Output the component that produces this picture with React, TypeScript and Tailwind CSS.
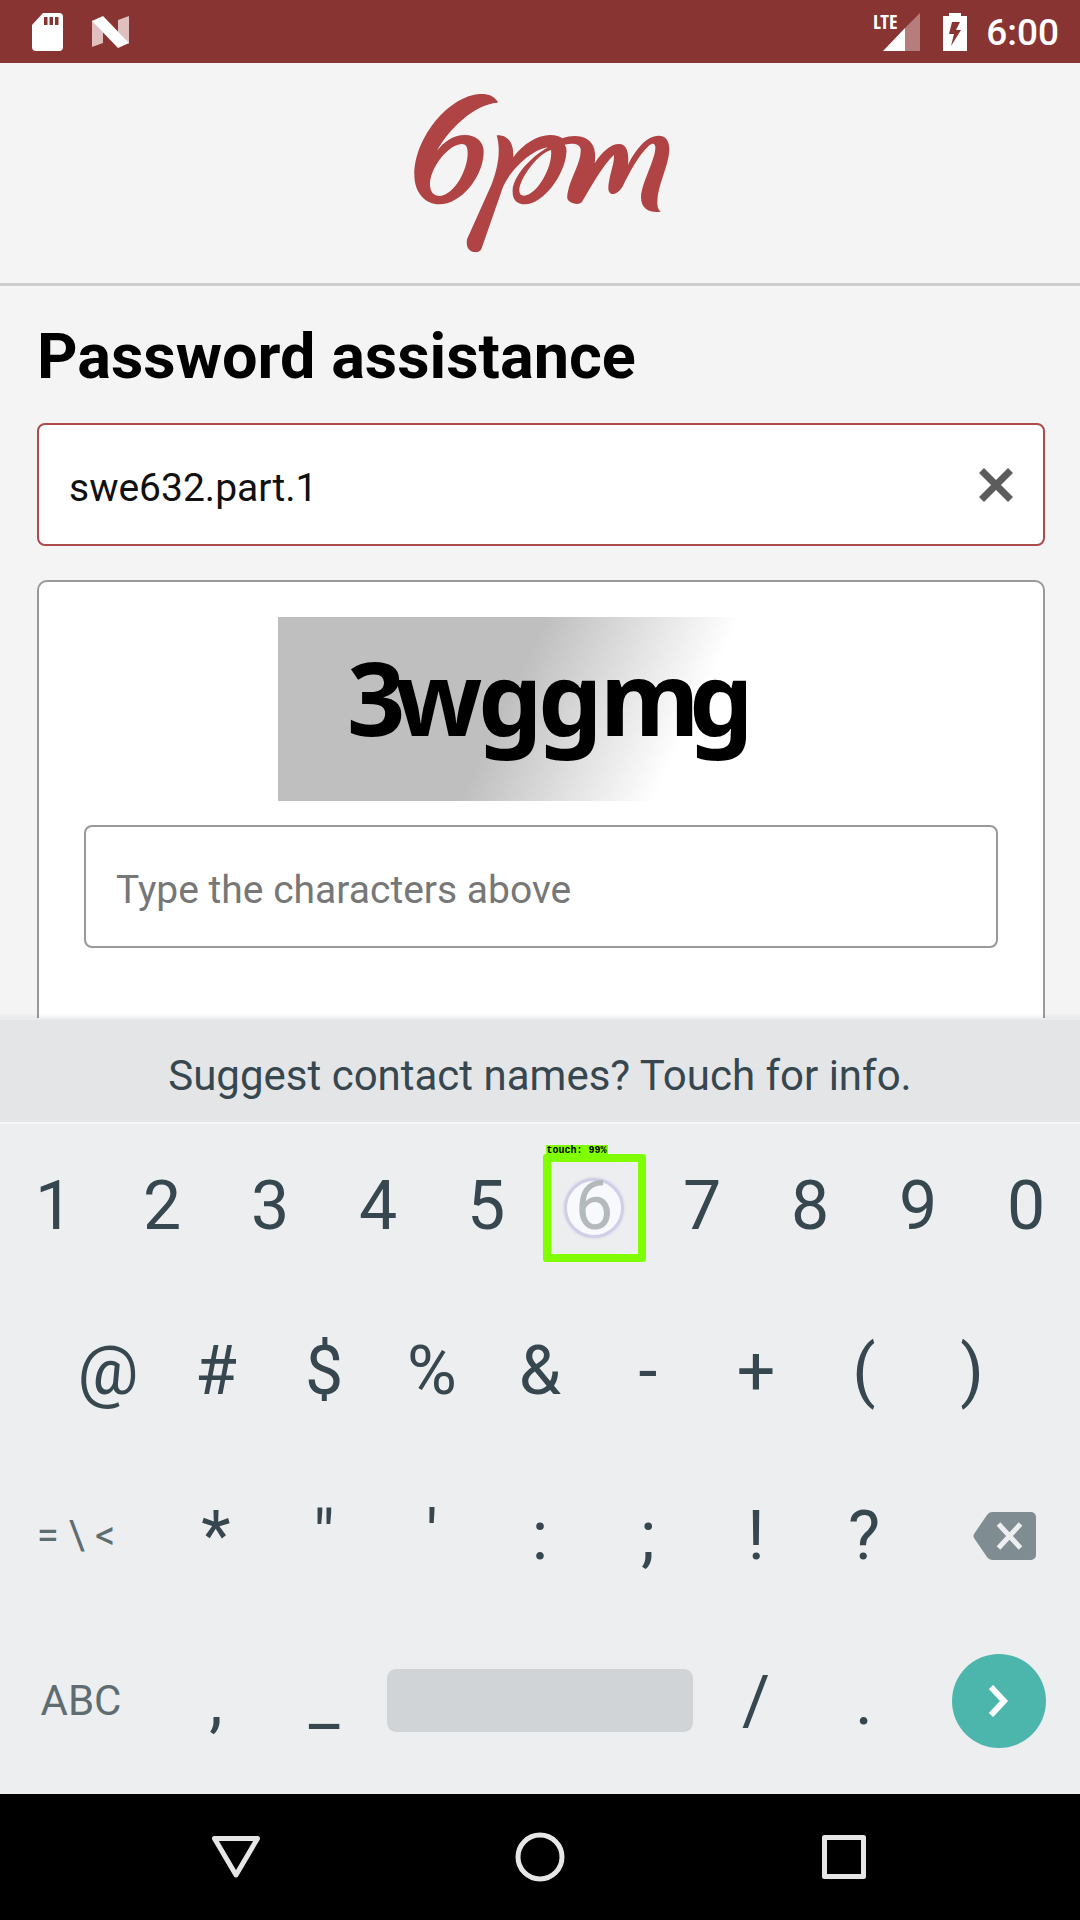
import { useState } from "react";

function StatusBar() {
  return (
    <header className="flex h-[63px] shrink-0 items-center justify-between bg-[#883432] pr-[21px] pl-8 text-white">
      <div className="flex items-center gap-7">
        <svg width="31" height="38" viewBox="0 0 31 38" aria-hidden="true">
          <path
            fillRule="evenodd"
            fill="#fff"
            d="M11 0H27a4 4 0 0 1 4 4V34a4 4 0 0 1-4 4H4a4 4 0 0 1-4-4V12ZM12 4V12H15.500V4ZM17.500 4V12H21V4ZM23 4V12H26.500V4Z"
          />
        </svg>
        <svg width="39" height="32" viewBox="0 0 39 32" aria-hidden="true">
          <path fill="#e0bfbf" d="M1 4 12 16V27L1 31ZM38 0V28L27 16V4Z" />
          <path fill="#fff" d="M1 5 12 0 38 27 27 32Z" />
        </svg>
      </div>
      <div className="flex items-center">
        <svg width="52" height="46" viewBox="-6 -4 52 46" aria-hidden="true">
          <path fill="#b57d7c" d="M44 0V38H29V15Z" />
          <path fill="#fff" d="M29 15V38H7Z" />
          <text
            x="-3"
            y="16"
            fill="#fff"
            fontFamily="'Open Sans Condensed', 'Liberation Sans Narrow', 'Liberation Sans', sans-serif"
            fontWeight="700"
            fontSize="20"
          >
            LTE
          </text>
        </svg>
        <svg className="ml-[21px]" width="24" height="38" viewBox="0 0 24 38" aria-hidden="true">
          <path
            fillRule="evenodd"
            fill="#fff"
            d="M6 0H18V3H24V38H0V3H6ZM9 9 6 21H11L8 33 18 17H13L17 9Z"
          />
        </svg>
        <span className="ml-[19px] pt-0.5 text-[37px] leading-none font-medium">6:00</span>
      </div>
    </header>
  );
}

function Logo() {
  return (
    <svg width="300" height="220" viewBox="0 0 900 660" role="img" aria-label="6pm">
      <g fill="#b04344" fillRule="evenodd">
        <path d="M323 95C312 78 295 71 270 72C180 76 73 200 73 315C73 370 108 403 147 403C215 403 281 318 281 245C281 215 258 195 225 195C188 195 160 218 141 242C175 180 250 103 323 98ZM215 222C170 225 118 300 120 345C121 366 131 378 150 378C192 375 233 302 233 250C233 230 228 222 215 222Z" />
        <path d="M320 196C350 194 372 215 370 262C400 220 445 195 480 195C498 195 510 199 517 205C560 190 603 200 613 238C616 252 616 265 614 280C638 242 665 220 690 222C712 225 717 250 714 285C735 240 770 197 805 197C830 197 838 215 838 240C836 290 800 350 802 400C803 415 806 420 812 425C785 430 752 420 753 380C755 340 795 270 796 235C797 220 788 217 778 226C742 260 718 310 700 345C690 365 676 374 665 372C652 368 654 350 658 330C662 305 673 280 672 254C640 285 605 345 577 394C572 403 560 404 550 400C530 393 530 385 533 368C542 320 575 275 572 238C570 222 550 218 524 224C530 232 530 240 529 250C524 315 460 403 405 403C380 403 366 388 368 360C370 320 420 262 474 232C420 240 350 310 334 365L275 535C270 547 262 547 252 546C235 543 228 530 231 508L304 345C325 290 333 240 320 196ZM483 240C440 252 388 330 388 360C388 372 393 377 402 377C440 377 490 290 483 240Z" />
      </g>
    </svg>
  );
}

function Captcha() {
  return (
    <svg
      className="mx-auto block"
      width="526"
      height="184"
      viewBox="0 0 526 184"
      role="img"
      aria-label="Captcha characters"
    >
      <defs>
        <linearGradient id="captcha-fade" gradientUnits="userSpaceOnUse" x1="269" y1="0" x2="427" y2="75">
          <stop offset="0" stopColor="#bfbfbf" />
          <stop offset="1" stopColor="#fff" />
        </linearGradient>
      </defs>
      <rect width="526" height="184" fill="url(#captcha-fade)" />
      <text
        x="69 117 200 260 322 411"
        y="119"
        fontFamily="'Noto Sans', sans-serif"
        fontWeight="700"
        fontSize="102"
        fill="#000"
      >
        3wggmg
      </text>
    </svg>
  );
}

const keyClass = "flex h-full flex-1 items-center justify-center text-[68px] leading-none";
const wideKeyClass = "flex h-full flex-[1.5] items-center justify-center text-[#5f6c71]";

function Key({ label }: { label: string }) {
  return (
    <button type="button" className={keyClass}>
      {label}
    </button>
  );
}

function TouchedKey({ label }: { label: string }) {
  return (
    <button type="button" className="relative flex h-full flex-1 items-center justify-center text-[68px] leading-none">
      <span className="absolute mt-1 size-[60px] rounded-full border-[3px] border-[#cfcfe8] bg-[#f8f9fc] shadow-[0_0_3px_#cfcfe8]" />
      <span className="relative text-[#b4b9bb]">{label}</span>
      <span className="absolute mt-1 h-[108px] w-[103px] rounded-[3px] border-8 border-[#7fff00]">
        <span className="absolute -top-[17px] -left-[5px] bg-[#7fff00] px-px font-['Liberation_Mono',monospace] text-[10px] leading-[11px] font-bold whitespace-nowrap text-black">
          touch: 99%
        </span>
      </span>
    </button>
  );
}

function Keyboard() {
  return (
    <section aria-label="Keyboard" className="shrink-0 bg-[#eceeef] pb-[11px] text-[#37474f]">
      <button
        type="button"
        className="flex h-[106px] w-full items-center justify-center border-t-2 border-b-2 border-t-[#ececed] border-b-[#f6f7f8] bg-[#e4e5e7] pt-2.5 text-[42px] leading-none shadow-[0_-2px_4px_rgba(0,0,0,0.06)]"
      >
        Suggest contact names? Touch for info.
      </button>
      <div className="flex h-[164px]">
        {["1", "2", "3", "4", "5"].map((k) => (
          <Key key={k} label={k} />
        ))}
        <TouchedKey label="6" />
        {["7", "8", "9", "0"].map((k) => (
          <Key key={k} label={k} />
        ))}
      </div>
      <div className="flex h-[165px] px-[5%]">
        {["@", "#", "$", "%", "&", "-", "+", "(", ")"].map((k) => (
          <Key key={k} label={k} />
        ))}
      </div>
      <div className="flex h-[165px]">
        <button type="button" className={wideKeyClass}>
          <span className="pr-2.5 text-[40px] leading-none">= \ &lt;</span>
        </button>
        {["*", '"', "'", ":", ";", "!", "?"].map((k) => (
          <Key key={k} label={k} />
        ))}
        <button type="button" aria-label="Backspace" className={wideKeyClass}>
          <svg className="ml-2.5" width="63" height="48" viewBox="0 0 63 48" aria-hidden="true">
            <path
              fill="#7f8c91"
              d="M19 0H58a5 5 0 0 1 5 5V43a5 5 0 0 1-5 5H19q-3 0-5-3L1 26q-1-2 0-4L14 3q2-3 5-3Z"
            />
            <path stroke="#eceeef" strokeWidth="5" d="M25.500 12 47.500 36M47.500 12 25.500 36" />
          </svg>
        </button>
      </div>
      <div className="flex h-[165px]">
        <button type="button" className={wideKeyClass}>
          <span className="text-[42px] leading-none">ABC</span>
        </button>
        {[",", "_"].map((k) => (
          <Key key={k} label={k} />
        ))}
        <button type="button" aria-label="Space" className="flex h-full flex-[3] items-center">
          <span className="mx-[9px] h-[63px] flex-1 rounded-[9px] bg-[#d0d4d7]" />
        </button>
        {["/", "."].map((k) => (
          <Key key={k} label={k} />
        ))}
        <button type="button" aria-label="Go" className={wideKeyClass}>
          <span className="flex size-[94px] items-center justify-center rounded-full bg-[#4db6ac]">
            <svg width="24" height="34" viewBox="0 0 24 34" aria-hidden="true">
              <path fill="none" stroke="#fff" strokeWidth="6" d="M4 3 17 17 4 31" />
            </svg>
          </span>
        </button>
      </div>
    </section>
  );
}

function NavBar() {
  return (
    <nav className="flex h-[126px] shrink-0 items-center justify-center gap-[254px] bg-black">
      <button type="button" aria-label="Back">
        <svg width="50" height="50" viewBox="0 0 50 50" fill="none" stroke="#e6e6e6" strokeWidth="5" strokeLinejoin="round" aria-hidden="true">
          <path d="M3.500 6.500H46.500L25 43Z" />
        </svg>
      </button>
      <button type="button" aria-label="Home">
        <svg width="50" height="50" viewBox="0 0 50 50" fill="none" stroke="#e6e6e6" strokeWidth="5" aria-hidden="true">
          <circle cx="25" cy="25" r="22" />
        </svg>
      </button>
      <button type="button" aria-label="Recent apps">
        <svg width="50" height="50" viewBox="0 0 50 50" fill="none" stroke="#e6e6e6" strokeWidth="5" strokeLinejoin="round" aria-hidden="true">
          <rect x="5.500" y="5.500" width="39" height="39" />
        </svg>
      </button>
    </nav>
  );
}

export default function App() {
  const [email, setEmail] = useState("swe632.part.1");
  const [guess, setGuess] = useState("");

  return (
    <div className="flex h-screen flex-col overflow-hidden bg-[#f4f4f4] font-['Roboto',sans-serif]">
      <StatusBar />
      <main className="min-h-0 flex-1 overflow-hidden">
        <div className="flex h-[223px] items-end justify-center border-b-[3px] border-[#cdcdcd]">
          <div className="-mb-[7px]">
            <Logo />
          </div>
        </div>
        <form className="px-[37px] pr-[35px] pt-[33px]" onSubmit={(e) => e.preventDefault()}>
          <h1 className="text-[63px] leading-[76px] font-bold text-black">Password assistance</h1>
          <div className="mt-7 flex h-[123px] items-center rounded-lg border-[2px] border-[#ad4a4c] bg-white pr-[30px]">
            <input
              type="text"
              aria-label="Email"
              value={email}
              onChange={(e) => setEmail(e.target.value)}
              className="h-full min-w-0 flex-1 bg-transparent pt-1.5 pl-[30px] text-[39px] text-[#111] outline-none"
            />
            <button type="button" aria-label="Clear" onClick={() => setEmail("")}>
              <svg width="34" height="34" viewBox="0 0 34 34" stroke="#5c5c5c" strokeWidth="7" aria-hidden="true">
                <path d="M2.500 2.500 31.500 31.500M31.500 2.500 2.500 31.500" />
              </svg>
            </button>
          </div>
          <div className="mt-[34px] rounded-[10px] border-2 border-[#999] bg-white px-[45px] pt-[35px] pb-40">
            <Captcha />
            <input
              type="text"
              aria-label="Type the characters above"
              placeholder="Type the characters above"
              value={guess}
              onChange={(e) => setGuess(e.target.value)}
              className="mt-6 h-[123px] w-full rounded-lg border-2 border-[#999] bg-white px-[30px] pt-1.5 text-[39px] text-[#111] outline-none placeholder:text-[#777]"
            />
          </div>
        </form>
      </main>
      <Keyboard />
      <NavBar />
    </div>
  );
}
